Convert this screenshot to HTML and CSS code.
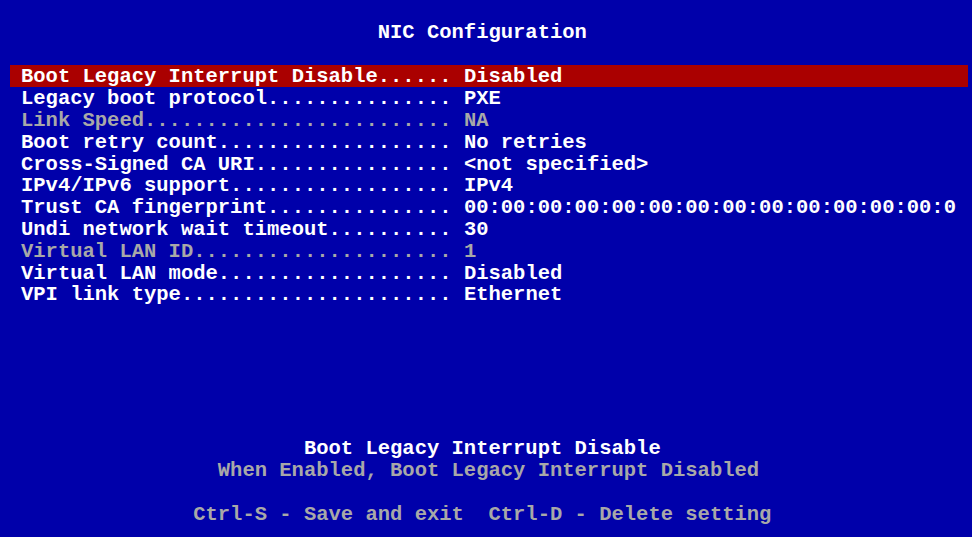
FILE: index.html
```html
<!DOCTYPE html>
<html lang="en">
<head>
  <meta charset="UTF-8">
  <meta name="viewport" content="width=device-width, initial-scale=1.0">
  <title>NIC Configuration</title>
  <link rel="stylesheet" href="styles.css">
</head>
<body>

<div class="screen">
  <div class="title">NIC Configuration</div>

  <ul class="menu">
    <li class="item selected"><span class="label">Boot Legacy Interrupt Disable......</span> <span class="value">Disabled</span></li>
    <li class="item"><span class="label">Legacy boot protocol...............</span> <span class="value">PXE</span></li>
    <li class="item disabled"><span class="label">Link Speed.........................</span> <span class="value">NA</span></li>
    <li class="item"><span class="label">Boot retry count...................</span> <span class="value">No retries</span></li>
    <li class="item"><span class="label">Cross-Signed CA URI................</span> <span class="value">&lt;not specified&gt;</span></li>
    <li class="item"><span class="label">IPv4/IPv6 support..................</span> <span class="value">IPv4</span></li>
    <li class="item"><span class="label">Trust CA fingerprint...............</span> <span class="value">00:00:00:00:00:00:00:00:00:00:00:00:00:0</span></li>
    <li class="item"><span class="label">Undi network wait timeout..........</span> <span class="value">30</span></li>
    <li class="item disabled"><span class="label">Virtual LAN ID.....................</span> <span class="value">1</span></li>
    <li class="item"><span class="label">Virtual LAN mode...................</span> <span class="value">Disabled</span></li>
    <li class="item"><span class="label">VPI link type......................</span> <span class="value">Ethernet</span></li>
  </ul>

  <div class="help">
    <div class="help-title">Boot Legacy Interrupt Disable</div>
    <div class="help-text">When Enabled, Boot Legacy Interrupt Disabled</div>
  </div>

  <div class="keys">Ctrl-S - Save and exit  Ctrl-D - Delete setting</div>
</div>

</body>
</html>
```

FILE: styles.css
```css
body {
  margin: 0;
  background-color: #0000aa;
  color: #fff;
  font-family: "Liberation Mono", monospace;
  font-size: 20.5px;
  font-weight: bold;
  line-height: 21.8px;
  overflow: hidden;
}
.screen {
  padding: 22.3px 0 0 8.7px;
}
.title {
  padding-left: 30ch;
  margin-bottom: 20.8px;
}
.menu {
  list-style: none;
  margin: 0 0 0 1.3px;
  padding: 0;
  width: 958px;
}
.item {
  box-sizing: border-box;
  padding: 1.5px 0 0 11px;
  height: 21.8px;
  white-space: pre;
}
.item.selected {
  background-color: #aa0000;
}
.item.disabled {
  color: #a8a8a8;
}
.help {
  margin-top: 133.8px;
}
.help-title {
  padding-left: 24ch;
}
.help-text {
  padding-left: 17ch;
  color: #a8a8a8;
}
.keys {
  margin-top: 21.8px;
  padding-left: 15ch;
  color: #a8a8a8;
  white-space: pre;
}
```
